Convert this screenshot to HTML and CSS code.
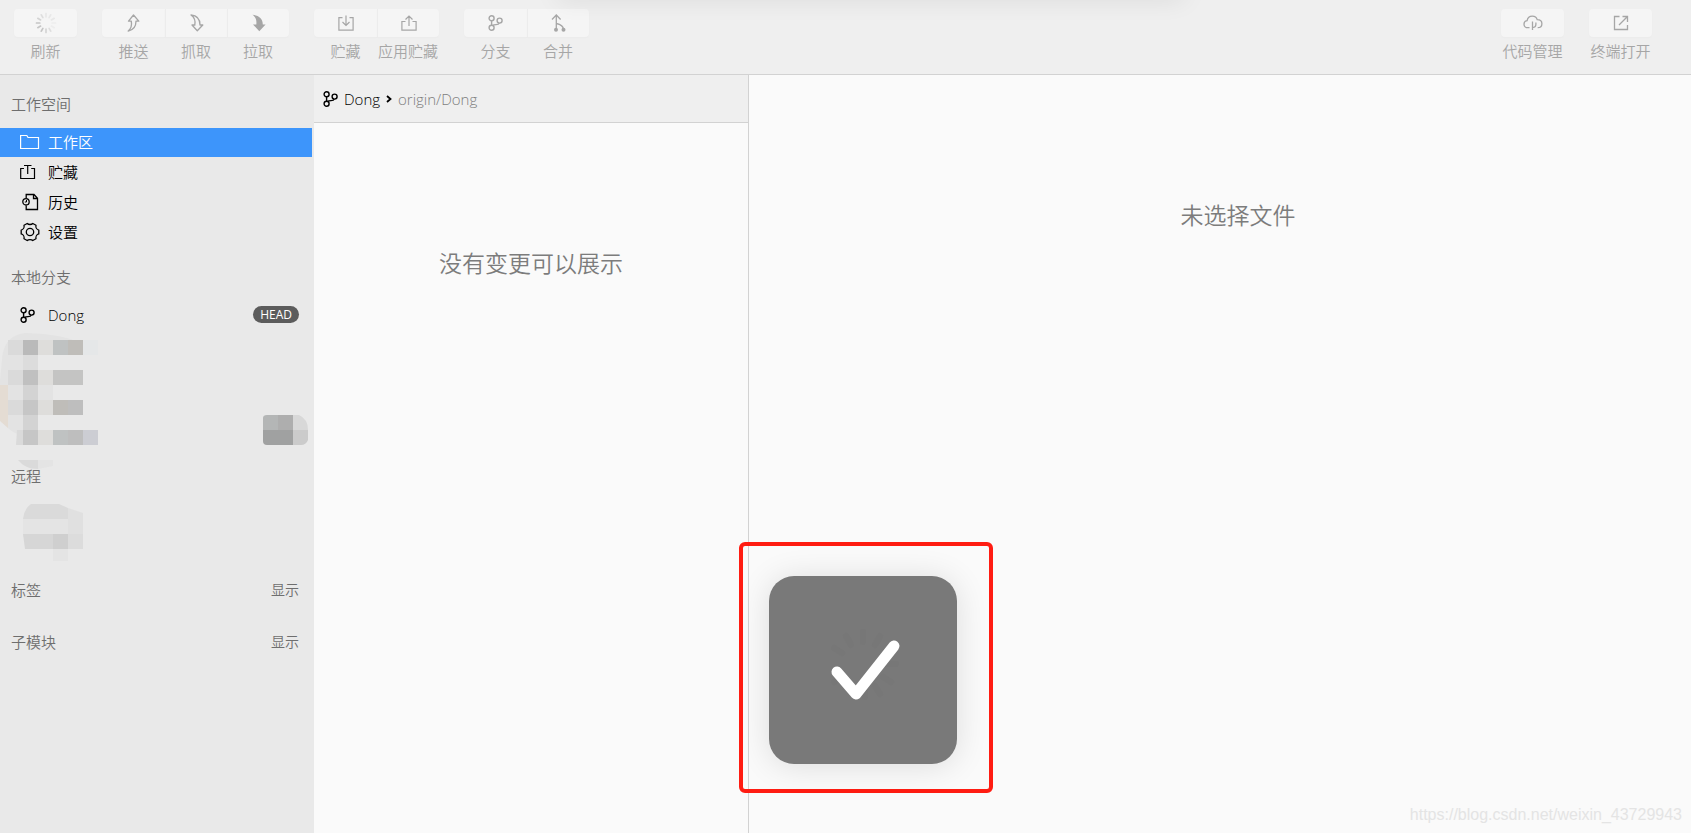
FILE: index.html
```html
<!DOCTYPE html>
<html lang="zh-CN">
<head>
<meta charset="utf-8">
<title>Dong</title>
<link rel="stylesheet" href="styles.css">
</head>
<body>
<svg class="defs" aria-hidden="true">
  <symbol id="branch" viewBox="0 0 15 16">
    <g fill="none" stroke="currentColor" stroke-width="1.4"><circle cx="3.6" cy="3.3" r="2.5"/><circle cx="3.6" cy="12.7" r="2.5"/><circle cx="11.6" cy="5.600" r="2.5"/><path d="M3.6 5.800v4.400M11.2 8.100C10.500 10.500 7 9 4.800 10.400"/></g>
  </symbol>
</svg>
<div class="app">
  <header class="toolbar">
    <div class="group">
      <button class="tool" type="button"><span class="tile">
        <svg width="22" height="22" viewBox="0 0 22 22" stroke="#b5b5b5" stroke-width="1.7" stroke-linecap="round"><path opacity=".2" d="M11 1.5v3.300M15.700 2.800l-1.600 2.800M19.200 6.300l-2.800 1.600"/><path opacity=".12" d="M20.500 11h-3.300M19.200 15.700l-2.800-1.600"/><path opacity=".35" d="M6.300 2.800l1.600 2.800M15.700 19.200l-1.600-2.800"/><path opacity=".5" d="M2.800 6.300l2.800 1.600M11 20.500v-3.300"/><path opacity=".75" d="M1.500 11h3.300M2.800 15.700l2.800-1.600M6.300 19.200l1.600-2.800"/></svg>
      </span><span class="caption">刷新</span></button>
    </div>
    <div class="group">
      <button class="tool" type="button"><span class="tile">
        <svg width="13" height="18" viewBox="0 0 13 18" fill="none" stroke="currentColor" stroke-width="1.300" stroke-linejoin="round"><path d="M6.500 1 1.500 7.200h2.800C5 11 4.300 14.500 1.200 17 6 16 9 12.500 9 7.200h2.800z"/></svg>
      </span><span class="caption">推送</span></button>
      <button class="tool" type="button"><span class="tile">
        <svg width="14" height="18" viewBox="0 0 14 18" fill="none" stroke="currentColor" stroke-width="1.300" stroke-linejoin="round"><path d="M1 1c3.500 2.500 4.600 6 3.800 10H2l5.300 5.700 5.500-5.700H10C10 5 6.500 1.500 1 1z"/></svg>
      </span><span class="caption">抓取</span></button>
      <button class="tool" type="button"><span class="tile">
        <svg width="14" height="18" viewBox="0 0 14 18" fill="currentColor"><path d="M.500.800c3.500 2.500 4.300 6 3.800 9.700H1l6.300 6.800 6.300-6.800h-2.800C10.800 4.500 6.500 1.300.500.800z"/></svg>
      </span><span class="caption">拉取</span></button>
    </div>
    <div class="group">
      <button class="tool" type="button"><span class="tile">
        <svg width="16" height="16" viewBox="0 0 16 16" fill="none" stroke="currentColor" stroke-width="1.200"><path d="M4.500 2.600H.900v12.500h14.200V2.600h-3.600M8 .500v10M4.500 7 8 10.500 11.500 7"/></svg>
      </span><span class="caption">贮藏</span></button>
      <button class="tool" type="button"><span class="tile">
        <svg width="16" height="16" viewBox="0 0 16 16" fill="none" stroke="currentColor" stroke-width="1.200"><path d="M4.500 6.500H.900v8.600h14.200V6.500h-3.600M8 11V1M4.500 4.500 8 1l3.500 3.500"/></svg>
      </span><span class="caption">应用贮藏</span></button>
    </div>
    <div class="group">
      <button class="tool" type="button"><span class="tile"><svg width="15" height="16"><use href="#branch"/></svg></span><span class="caption">分支</span></button>
      <button class="tool" type="button"><span class="tile">
        <svg width="15" height="18" viewBox="0 0 15 18" fill="none" stroke="currentColor" stroke-width="1.300"><path d="M5.300 1v14.500M1 5.500 5.300 1l4.300 4.500M5.300 9.500c2.500.500 7 2 7.200 6"/><g fill="currentColor" stroke="none"><circle cx="5" cy="15.700" r="2"/><circle cx="12.500" cy="15.700" r="2"/></g></svg>
      </span><span class="caption">合并</span></button>
    </div>
    <div class="group push-right">
      <button class="tool" type="button"><span class="tile">
        <svg width="20" height="16" viewBox="0 0 20 16" fill="none" stroke="currentColor" stroke-width="1.300"><path d="M6.500 12.700H4.800C2.600 12.700 1 11.200 1 9.200c0-1.900 1.400-3.300 3.100-3.500C4.600 3 6.600 1.200 9.300 1.200c2.400 0 4.300 1.300 4.900 3.500 2.700 0 4.700 1.600 4.700 4 0 2.300-1.700 4-4.200 4M9.500 6.500V15M9.500 12.500c2 0 3.400-1.200 3.400-3.200V7.500"/></svg>
      </span><span class="caption">代码管理</span></button>
    </div>
    <div class="group">
      <button class="tool" type="button"><span class="tile">
        <svg width="16" height="16" viewBox="0 0 16 16" fill="none" stroke="currentColor" stroke-width="1.300"><path d="M6.500 1.500H1.500v13h13V10M9.500 1.500h5v5.500M14.500 1.500 6 10"/></svg>
      </span><span class="caption">终端打开</span></button>
    </div>
    <div class="sheet-shadow"></div>
  </header>

  <div class="body">
    <nav class="sidebar">
      <h2 class="heading">工作空间</h2>
      <ul class="list">
        <li><a class="item selected" href="#"><span class="icon"><svg width="20" height="16" viewBox="0 0 20 16" fill="none" stroke="currentColor" stroke-width="1.200"><path d="M.600 1.500h6.200l1.200 2h10.500v11H.600z"/></svg></span>工作区</a></li>
        <li><a class="item" href="#"><span class="icon"><svg width="16" height="16" viewBox="0 0 16 16" fill="none" stroke="currentColor" stroke-width="1.200"><path d="M4 4.500H.700v10h13.800v-10h-3.300M4 1.500h7.500M7.700 1.500V10"/></svg></span>贮藏</a></li>
        <li><a class="item" href="#"><span class="icon indent"><svg width="17" height="18" viewBox="0 0 17 18" fill="none" stroke="currentColor" stroke-width="1.300"><path d="M4.200 5V1.500h7.800l3.500 3.700v11.300H4.200v-4M11.500 1.500v4h4"/><circle cx="4" cy="8.800" r="3.200"/><path d="M4.500 7v2H2.800" stroke-width="1"/></svg></span>历史</a></li>
        <li><a class="item" href="#"><span class="icon"><svg width="20" height="20" viewBox="0 0 20 20" fill="none" stroke="currentColor" stroke-width="1.300" stroke-linejoin="round"><path d="M7.200 1.500C8.500 2.800 11.500 2.800 12.800 1.500L16 3.300c-.500 2 .700 4.200 2.800 4.800v3.800c-2.100.600-3.300 2.800-2.800 4.800l-3.200 1.800c-1.300-1.300-4.300-1.300-5.600 0L4 16.700c.500-2-.700-4.200-2.800-4.800V8.100C3.300 7.500 4.500 5.300 4 3.300z"/><circle cx="10" cy="10" r="3.700"/></svg></span>设置</a></li>
      </ul>
      <h2 class="heading">本地分支</h2>
      <ul class="list">
        <li><a class="item" href="#"><span class="icon"><svg width="15" height="16"><use href="#branch"/></svg></span>Dong<span class="badge">HEAD</span></a></li>
      </ul>
      <svg class="mosaic local" viewBox="0 0 312 130" width="312" height="130" aria-hidden="true">
        <path fill="#e3e3e3" d="M2 30C3 12 13 3 28 3c15 1 32 2 45 7l8 3v102H16l4-10C8 101 0 90 0 84V50z"/>
        <path fill="#e4dcd3" d="M0 55h8v43l-8-7z"/>
        <path fill="#e9e9e9" d="M38 25h60v15H38zM53 55h45v15H53zM38 85h60v15H38z"/>
        <path fill="#dadada" d="M8 10h15v15H8zM8 40h15v15H8zM8 70h15v15H8zM17 100h6v15h-7z"/>
        <path fill="#bababa" d="M23 10h15v15H23z"/><path fill="#c0c0c0" d="M23 40h15v15H23z"/>
        <path fill="#dcdcdc" d="M23 25h15v15H23z"/>
        <path fill="#c6c6c6" d="M23 70h15v15H23zM23 100h15v15H23z"/><path fill="#d3d3d3" d="M23 55h15v15H23zM23 85h15v15H23z"/>
        <path fill="#dedddb" d="M38 10h15v15H38zM38 40h15v15H38zM38 70h15v15H38zM38 100h15v15H38z"/>
        <path fill="#bfc2c2" d="M53 10h15v15H53zM53 100h15v15H53z"/><path fill="#c4c4c3" d="M53 40h30v15H53z"/>
        <path fill="#bfbdb9" d="M68 10h15v15H68zM53 70h15v15H53z"/><path fill="#bebebe" d="M68 70h15v15H68zM68 100h15v15H68z"/>
        <path fill="#cccdd3" d="M83 100h15v15H83z"/><path fill="#e5e7e8" d="M83 10h15v15H83z"/>
        <path fill="#dadada" d="M18 130h20v9c-9 0-15-3-20-9z"/><path fill="#e4e4e4" d="M38 130h15v6l-15 3z"/>
        <path fill="#b4b6b6" d="M263 100v-12q0-3 4-3h11v15z"/><path fill="#aeaeae" d="M278 85h15v15h-15z"/>
        <path fill="#d8d8d8" d="M293 85h6q9 4 9 15h-15z"/><path fill="#a0a1a1" d="M263 100h30v15h-26q-4 0-4-4z"/><path fill="#cbcbcb" d="M293 100h15v10q-2 5-7 5h-8z"/>
      </svg>
      <h2 class="heading">远程</h2>
      <svg class="mosaic remotes" viewBox="0 0 312 70" width="312" height="70" aria-hidden="true">
        <path fill="#dadada" d="M23 25q1-10 8-15h28l9 4v11z"/><path fill="#e4e4e4" d="M23 25h45v15H23zM53 55h15v12H53z"/>
        <path fill="#e0e0e0" d="M68 14l15 5v21H68z"/><path fill="#d6d6d6" d="M23 40h30v15H25z"/><path fill="#cfcfcf" d="M53 40h15v15H53z"/><path fill="#dcdcdc" d="M68 40h15v15H68z"/>
      </svg>
      <div class="fold"><h2 class="heading">标签</h2><button class="show" type="button">显示</button></div>
      <div class="fold"><h2 class="heading">子模块</h2><button class="show" type="button">显示</button></div>
    </nav>

    <section class="changes">
      <div class="tracking">
        <svg width="15" height="16"><use href="#branch"/></svg>
        <span>Dong</span>
        <svg width="6" height="8" viewBox="0 0 6 8" fill="none" stroke="#000" stroke-width="1.800"><path d="M1 1l3.500 3L1 7"/></svg>
        <span class="remote">origin/Dong</span>
      </div>
      <p class="empty">没有变更可以展示</p>
    </section>

    <main class="detail">
      <p class="empty">未选择文件</p>
      <p class="watermark">https://blog.csdn.net/weixin_43729943</p>
    </main>
  </div>

  <div class="frame">
    <div class="toast" role="status" aria-label="完成">
      <svg width="188" height="188" viewBox="0 0 188 188" fill="none" stroke-linecap="round">
        <path stroke="#777" stroke-width="6" d="M94 56v10M111 60l-5 9M77 60l5 9M65 72l8 5M127 88h-8M122 106l-8-5M111 118l-5-8M96 121v-9M65 106l8-5"/>
        <path stroke="#fff" stroke-width="11" stroke-linejoin="round" d="M68 96l19 22 38-48"/>
      </svg>
    </div>
  </div>
</div>
</body>
</html>
```
FILE: styles.css
```css
* { box-sizing: border-box; }

body {
  margin: 0;
  font: 15px/20px "Open Sans", "Noto Sans CJK SC", sans-serif;
  font-weight: 350;
  color: #000;
  background: #fafafa;
}

h2, p, ul { margin: 0; padding: 0; font-weight: inherit; font-size: inherit; }
ul { list-style: none; }
svg { display: block; flex: none; }
.defs { position: absolute; width: 0; height: 0; }

button {
  padding: 0;
  border: 0;
  background: none;
  font: inherit;
  color: inherit;
}

.app {
  position: relative;
  display: flex;
  flex-direction: column;
  min-height: 100vh;
}

.toolbar {
  position: relative;
  display: flex;
  gap: 25px;
  height: 75px;
  padding: 9px 39px 0 14px;
  overflow: hidden;
  background: #efefef;
  border-bottom: 1px solid #d2d2d2;
  color: #a6a6a6;
}

.group { display: flex; }
.push-right { margin-left: auto; }

.tool { display: flex; flex-direction: column; width: 63px; }
.tool + .tool { width: 62px; }

.tile {
  display: flex;
  align-items: center;
  justify-content: center;
  width: 100%;
  height: 28px;
  background: #f5f5f5;
  box-shadow: 0 1px 1px #ebebeb;
}

.tool + .tool .tile { border-left: 1px solid #ececec; }
.tool:first-child .tile { border-radius: 4px 0 0 4px; }
.tool:last-child .tile { border-radius: 0 4px 4px 0; }
.tool:only-child .tile { border-radius: 4px; }

.caption {
  width: 100%;
  margin-top: 4px;
  text-align: center;
  white-space: nowrap;
}

.sheet-shadow {
  position: absolute;
  top: -20px;
  left: 33%;
  right: 30%;
  height: 16px;
  box-shadow: 0 2px 26px rgba(0, 0, 0, 0.11);
}

.body { display: flex; flex: 1; }

.sidebar {
  width: 314px;
  padding: 19px 2px 0 0;
  background: #e9e9e9;
}

.heading {
  padding-left: 11px;
  color: #6e6e6e;
}

.list {
  display: flex;
  flex-direction: column;
  gap: 1px;
  padding: 14px 0 20px;
}

.item {
  display: flex;
  align-items: center;
  height: 29px;
  padding: 0 13px 2px 20px;
  color: #000;
  text-decoration: none;
}

.item.selected { background: #3d95fb; color: #fff; }
.icon { width: 28px; }
.icon.indent { padding-left: 2px; }

.badge {
  height: 17px;
  margin-left: auto;
  padding: 0 7px;
  border-radius: 9px;
  background: #5c5c5c;
  color: #fff;
  font-size: 12px;
  font-weight: 400;
  line-height: 17px;
}

.mosaic { overflow: visible; }
.mosaic.local { margin: -20px 0 6px; }
.mosaic.remotes { margin-top: 8px; }

.fold {
  display: flex;
  align-items: center;
  justify-content: space-between;
  height: 52px;
  padding-right: 13px;
}

.show { color: #6e6e6e; font-size: 14px; }

.changes { width: 435px; border-right: 1px solid #d2d2d2; }

.tracking {
  display: flex;
  align-items: center;
  gap: 6px;
  height: 48px;
  padding-left: 9px;
  background: #efefef;
  border-bottom: 1px solid #d2d2d2;
}

.remote { color: #7e7e7e; }

.empty {
  color: #7c7c7c;
  font-size: 23px;
  line-height: 32px;
  text-align: center;
}

.changes .empty { padding-top: 124px; }

.detail {
  display: flex;
  flex: 1;
  flex-direction: column;
  justify-content: space-between;
}

.detail .empty { padding: 124px 0 0 36px; }

.watermark {
  padding: 0 9px 8px 0;
  color: #e4e4e4;
  font-family: "Liberation Sans", sans-serif;
  font-size: 16px;
  text-align: right;
}

.frame {
  position: absolute;
  left: 739px;
  bottom: 40px;
  padding: 30px 32px 25px 26px;
  border: 4px solid #ff1c12;
  border-radius: 6px;
}

.toast {
  border-radius: 25px;
  background: #797979;
  box-shadow: 0 2px 32px rgba(0, 0, 0, 0.12);
}
```
